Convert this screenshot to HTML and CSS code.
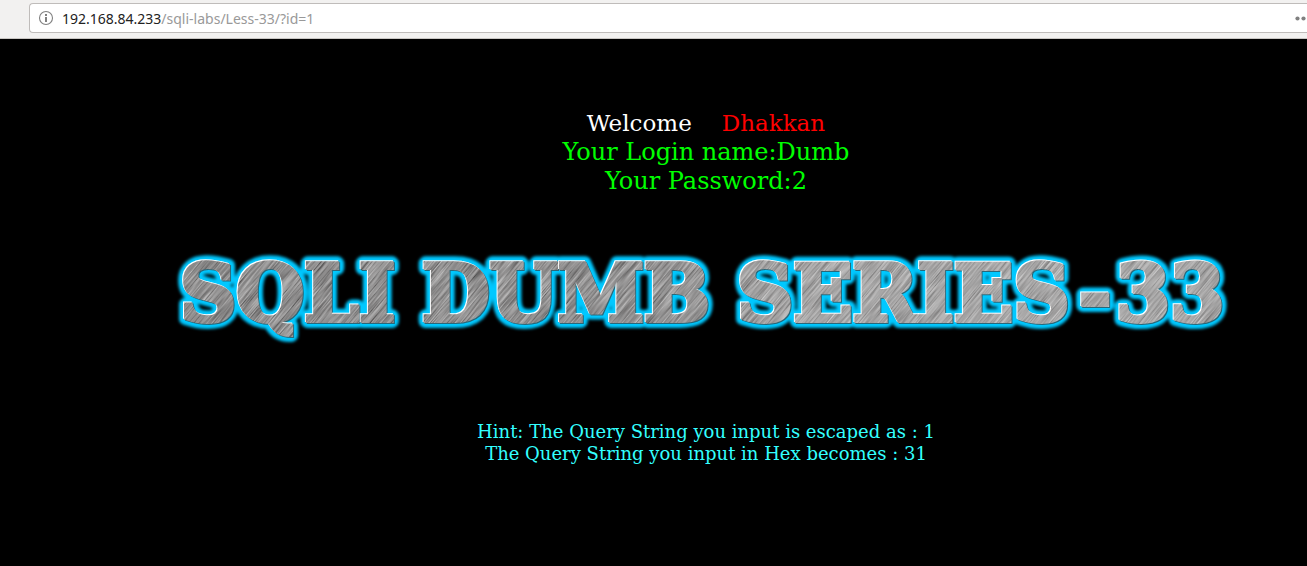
FILE: index.html
```html
<!DOCTYPE html>
<html lang="en">
<head>
<meta charset="utf-8">
<title>Less-33</title>
<link rel="stylesheet" href="styles.css">
</head>
<body>
<header class="toolbar">
  <div class="address">
    <svg class="info-icon" viewBox="0 0 16 16" aria-hidden="true"><circle cx="8" cy="8" r="6.5" fill="none" stroke="#808080" stroke-width="1.1"/><path d="M7 4h2v2H7zM7 7h2v5H7z" fill="#808080"/></svg>
    <a class="url" href="#"><span class="host">192.168.84.233</span>/sqli-labs/Less-33/?id=1</a>
    <button class="more" aria-label="Page actions"><svg class="dots" viewBox="0 0 16 5"><circle cx="2.5" cy="2.5" r="2.1"/><circle cx="8.5" cy="2.5" r="2.1"/><circle cx="14.5" cy="2.5" r="2.1"/></svg></button>
  </div>
</header>
<main class="page">
  <section class="login">
    <p class="welcome">Welcome<span class="name">Dhakkan</span></p>
    <p>Your Login name:Dumb</p>
    <p>Your Password:2</p>
  </section>
  <svg class="banner" viewBox="0 0 1080 110" role="img" aria-label="SQLI DUMB SERIES-33">
    <defs>
      <g id="words">
        <text x="14" y="76">SQLI</text>
        <text x="256" y="76">DUMB</text>
        <text x="571" y="76">SERIES</text>
        <text x="913" y="76">-</text>
        <text x="950" y="76">33</text>
      </g>
      <filter id="glow" x="-5%" y="-40%" width="110%" height="180%"><feGaussianBlur stdDeviation="1.8"/></filter>
      <filter id="brushed" x="0" y="0" width="100%" height="100%">
        <feTurbulence type="fractalNoise" baseFrequency="0.03 0.8" numOctaves="2" seed="8"/>
        <feColorMatrix values="0.7 0 0 0 0.05  0.7 0 0 0 0.045  0.7 0 0 0 0.045  0 0 0 0 1"/>
        <feComponentTransfer><feFuncR type="gamma" exponent="1.45"/><feFuncG type="gamma" exponent="1.45"/><feFuncB type="gamma" exponent="1.45"/></feComponentTransfer>
      </filter>
      <linearGradient id="sheen"><stop offset="0" stop-color="#fff" stop-opacity=".02"/><stop offset=".45" stop-color="#fff" stop-opacity=".06"/><stop offset=".6" stop-color="#fff" stop-opacity=".22"/><stop offset="1" stop-color="#fff" stop-opacity=".25"/></linearGradient>
      <mask id="letters" maskUnits="userSpaceOnUse" x="0" y="0" width="1080" height="110"><use href="#words" fill="#fff" stroke="#fff" stroke-width="4"/></mask>
    </defs>
    <use href="#words" fill="#00c8ff" stroke="#00c8ff" stroke-width="14" stroke-linejoin="round" filter="url(#glow)"/>
    <use href="#words" y="1" x="1" fill="#28687a" stroke="#28687a" stroke-width="4"/>
    <use href="#words" y="-1" x="-1" fill="#fff" stroke="#fff" stroke-width="4"/>
    <g mask="url(#letters)">
      <rect x="-300" y="-700" width="1700" height="1500" transform="rotate(-50 540 55)" filter="url(#brushed)"/>
      <rect width="1080" height="110" fill="url(#sheen)"/>
    </g>
  </svg>
  <section class="hint">
    <p>Hint: The Query String you input is escaped as : 1</p>
    <p>The Query String you input in Hex becomes : 31</p>
  </section>
</main>
</body>
</html>
```
FILE: styles.css
```css
* { box-sizing: border-box; }
body { margin: 0; background: #000; }
p { margin: 0; }
.toolbar {
  height: 39px;
  padding: 3px 0 0 29px;
  background: #f2f1f0;
  border-bottom: 1px solid #c9c6c3;
}
.address {
  display: flex;
  align-items: center;
  height: 30px;
  padding-left: 8px;
  background: #fff;
  border: 1px solid #bfbcba;
  border-right: 0;
  border-radius: 4px 0 0 4px;
  overflow: hidden;
}
.info-icon { width: 16px; height: 16px; flex: none; }
.url {
  flex: 1;
  margin-left: 8px;
  font: 14px "Noto Sans", sans-serif;
  color: #999;
  text-decoration: none;
}
.host { color: #222; }
.more {
  flex: none;
  width: 12px;
  padding: 0;
  border: 0;
  background: none;
  display: flex;
}
.dots { width: 16px; height: 5px; flex: none; fill: #808080; }
.page {
  display: flex;
  flex-direction: column;
  align-items: center;
  padding: 70px 0 0 105px;
  font-family: "DejaVu Serif", serif;
  text-align: center;
}
.login { font-size: 24px; line-height: 29px; color: #0f0; }
.welcome { font-size: 23px; color: #fff; }
.name { margin-left: 30px; color: #f00; }
.banner {
  width: 1080px;
  height: 110px;
  margin-top: 49px;
  flex: none;
  font: bold 78px "DejaVu Serif", serif;
}
.hint {
  margin-top: 66px;
  font-size: 18px;
  line-height: 22px;
  color: #3ff;
}
```
